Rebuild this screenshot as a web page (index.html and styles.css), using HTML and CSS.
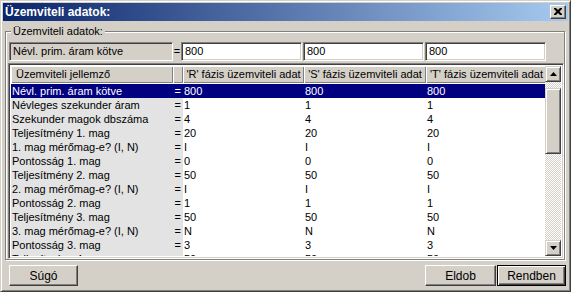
FILE: index.html
```html
<!DOCTYPE html>
<html lang="hu">
<head>
    <meta charset="UTF-8">
    <title>Üzemviteli adatok</title>
    <link rel="stylesheet" href="styles.css">
</head>
<body>
    <div class="window">
        <div class="titlebar">
            <span class="title">Üzemviteli adatok:</span>
            <button class="close">
                <svg width="8" height="7" viewBox="0 0 8 7">
                    <path d="M0 0h2l2 2 2-2h2v1l-2.5 2.5 2.5 2.5v1h-2l-2-2-2 2h-2v-1l2.5-2.5-2.5-2.5z" fill="#000"/>
                </svg>
            </button>
        </div>
        <div class="body">
            <fieldset class="group">
                <legend>Üzemviteli adatok:</legend>
                <div class="prim-row">
                    <div class="readonly">Névl. prim. áram kötve</div>
                    <span class="eq-label">=</span>
                    <input class="edit" value="800">
                    <input class="edit" value="800">
                    <input class="edit" value="800">
                </div>
                <div class="grid">
                    <div class="grid-main">
                        <div class="grid-head">
                            <div class="hcell left">Üzemviteli jellemző</div>
                            <div class="hcell"></div>
                            <div class="hcell">'R' fázis üzemviteli adat</div>
                            <div class="hcell">'S' fázis üzemviteli adat</div>
                            <div class="hcell">'T' fázis üzemviteli adat</div>
                        </div>
                        <div class="row sel"><span class="name">Névl. prim. áram kötve</span><span class="eq">=</span><span>800</span><span>800</span><span>800</span></div>
                        <div class="row"><span class="name">Névleges szekunder áram</span><span class="eq">=</span><span>1</span><span>1</span><span>1</span></div>
                        <div class="row"><span class="name">Szekunder magok dbszáma</span><span class="eq">=</span><span>4</span><span>4</span><span>4</span></div>
                        <div class="row"><span class="name">Teljesítmény 1. mag</span><span class="eq">=</span><span>20</span><span>20</span><span>20</span></div>
                        <div class="row"><span class="name">1. mag mérőmag-e? (I, N)</span><span class="eq">=</span><span>I</span><span>I</span><span>I</span></div>
                        <div class="row"><span class="name">Pontosság 1. mag</span><span class="eq">=</span><span>0</span><span>0</span><span>0</span></div>
                        <div class="row"><span class="name">Teljesítmény 2. mag</span><span class="eq">=</span><span>50</span><span>50</span><span>50</span></div>
                        <div class="row"><span class="name">2. mag mérőmag-e? (I, N)</span><span class="eq">=</span><span>I</span><span>I</span><span>I</span></div>
                        <div class="row"><span class="name">Pontosság 2. mag</span><span class="eq">=</span><span>1</span><span>1</span><span>1</span></div>
                        <div class="row"><span class="name">Teljesítmény 3. mag</span><span class="eq">=</span><span>50</span><span>50</span><span>50</span></div>
                        <div class="row"><span class="name">3. mag mérőmag-e? (I, N)</span><span class="eq">=</span><span>N</span><span>N</span><span>N</span></div>
                        <div class="row"><span class="name">Pontosság 3. mag</span><span class="eq">=</span><span>3</span><span>3</span><span>3</span></div>
                        <div class="row"><span class="name">Teljesítmény 4. mag</span><span class="eq">=</span><span>50</span><span>50</span><span>50</span></div>
                    </div>
                    <div class="scrollbar">
                        <div class="sb-btn">
                            <svg width="7" height="4" viewBox="0 0 7 4"><path d="M3.5 0L7 4H0z" fill="#000"/></svg>
                        </div>
                        <div class="sb-gap"></div>
                        <div class="sb-thumb"></div>
                        <div class="sb-fill"></div>
                        <div class="sb-btn">
                            <svg width="7" height="4" viewBox="0 0 7 4"><path d="M0 0h7L3.5 4z" fill="#000"/></svg>
                        </div>
                    </div>
                </div>
            </fieldset>
            <div class="footer">
                <button class="btn">Súgó</button>
                <span class="spacer"></span>
                <button class="btn wide">Eldob</button>
                <button class="btn default">Rendben</button>
            </div>
        </div>
    </div>
</body>
</html>
```

FILE: styles.css
```css
* {
    margin: 0;
    padding: 0;
    box-sizing: border-box;
}
body {
    font-family: 'Liberation Sans', Arial, sans-serif;
    font-size: 11px;
    background: #d4d0c8;
    color: #000;
}
.window {
    width: 571px;
    height: 292px;
    background: #d4d0c8;
    border: 1px solid;
    border-color: #d4d0c8 #404040 #404040 #d4d0c8;
    box-shadow: inset 1px 1px #fff, inset -1px -1px #808080;
    padding: 2px;
    display: flex;
    flex-direction: column;
}
.titlebar {
    height: 18px;
    background: linear-gradient(to right, #0a246a, #a6caf0);
    display: flex;
    align-items: center;
    justify-content: space-between;
    padding: 0 2px;
}
.title {
    color: #fff;
    font-weight: bold;
    font-size: 12px;
}
.close {
    width: 16px;
    height: 14px;
    background: #d4d0c8;
    border: 1px solid;
    border-color: #fff #404040 #404040 #fff;
    box-shadow: inset -1px -1px #808080;
    display: flex;
    align-items: center;
    justify-content: center;
    padding-bottom: 1px;
}
.body {
    flex: 1;
    padding: 4px 3px 0 2px;
    display: flex;
    flex-direction: column;
}
.group {
    border: 1px solid #808080;
    box-shadow: inset 1px 1px #fff, 1px 1px #fff;
    padding: 4px 0 0 2px;
}
.group legend {
    margin-left: 3px;
    padding: 0 2px;
    line-height: 13px;
    background: #d4d0c8;
}
.prim-row {
    display: flex;
    height: 19px;
}
.readonly,
.edit {
    border: 1px solid;
    border-color: #808080 #fff #fff #808080;
    box-shadow: inset 1px 1px #404040, inset -1px -1px #d4d0c8;
    padding-left: 3px;
    font: inherit;
    line-height: 17px;
}
.readonly {
    width: 164px;
    margin-left: 1px;
    background: #d4d0c8;
}
.eq-label {
    width: 8px;
    text-align: center;
    line-height: 19px;
}
.edit {
    width: 121px;
    margin-right: 1px;
    background: #fff;
    outline: none;
}
.grid {
    margin-top: 2px;
    width: 556px;
    height: 196px;
    display: flex;
    background: #fff;
    border: 1px solid;
    border-color: #808080 #fff #fff #808080;
    box-shadow: inset 1px 1px #404040, inset -1px -1px #d4d0c8;
    padding: 2px;
}
.grid-main {
    width: 536px;
    overflow: hidden;
}
.grid-head,
.row {
    display: grid;
    grid-template-columns: 162px 10px 121px 122px 121px;
    white-space: nowrap;
}
.grid-head {
    height: 17px;
    margin-bottom: 1px;
}
.hcell {
    background: #d4d0c8;
    box-shadow: inset 1px 1px #fff, inset -1px -1px #808080;
    line-height: 17px;
    text-align: center;
    overflow: hidden;
}
.hcell.left {
    text-align: left;
    padding-left: 5px;
}
.row {
    height: 14px;
    line-height: 14px;
}
.row span {
    padding-left: 1px;
    overflow: hidden;
}
.row .name,
.row .eq {
    background: #e3e3e3;
}
.row .eq {
    padding: 0 2px 0 0;
    text-align: right;
}
.row.sel span {
    background: #000080;
    color: #fff;
}
.scrollbar {
    width: 16px;
    display: flex;
    flex-direction: column;
    background: repeating-conic-gradient(#fff 0 25%, #d4d0c8 0 50%) 0 0 / 2px 2px;
}
.sb-btn,
.sb-thumb {
    background: #d4d0c8;
    border: 1px solid;
    border-color: #d4d0c8 #404040 #404040 #d4d0c8;
    box-shadow: inset 1px 1px #fff, inset -1px -1px #808080;
}
.sb-btn {
    height: 16px;
    display: flex;
    align-items: center;
    justify-content: center;
}
.sb-gap {
    height: 6px;
}
.sb-thumb {
    height: 66px;
}
.sb-fill {
    flex: 1;
}
.footer {
    display: flex;
    margin-top: 5px;
    margin-right: -1px;
    padding-left: 4px;
    gap: 1px;
}
.spacer {
    flex: 1;
}
.btn {
    width: 69px;
    height: 21px;
    font: inherit;
    font-size: 12px;
    background: #d4d0c8;
    border: 1px solid;
    border-color: #fff #404040 #404040 #fff;
    box-shadow: inset -1px -1px #808080;
}
.btn.wide {
    width: 71px;
}
.btn.default {
    border-color: #000;
    box-shadow: inset 1px 1px #fff, inset -1px -1px #404040, inset -2px -2px #808080;
}
```
